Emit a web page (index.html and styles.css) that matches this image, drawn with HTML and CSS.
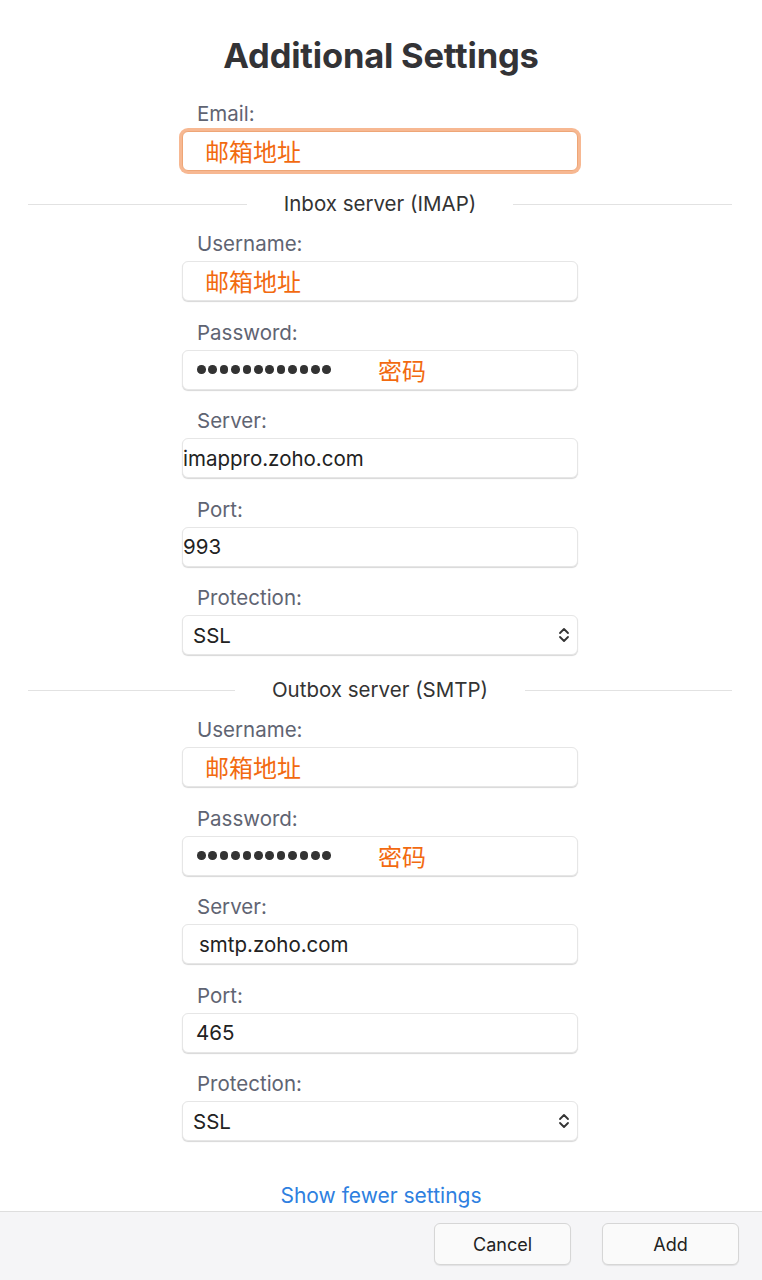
FILE: index.html
```html
<!DOCTYPE html>
<html>
<head>
<meta charset="utf-8">
<link rel="stylesheet" href="styles.css">
</head>
<body>
<div class="page">
  <h1 class="title">Additional Settings</h1>
  <div class="form">
    <div class="group email">
      <div class="label">Email:</div>
      <div class="field focus"><span class="cn">邮箱地址</span></div>
    </div>

    <div class="sep"><span class="line"></span><span class="sep-text">Inbox server (IMAP)</span><span class="line"></span></div>

    <div class="group">
      <div class="label">Username:</div>
      <div class="field"><span class="cn">邮箱地址</span></div>
    </div>
    <div class="group">
      <div class="label">Password:</div>
      <div class="field pw"><span class="dots"><i></i><i></i><i></i><i></i><i></i><i></i><i></i><i></i><i></i><i></i><i></i><i></i></span><span class="cn pwcn">密码</span></div>
    </div>
    <div class="group">
      <div class="label">Server:</div>
      <div class="field tight"><span class="val">imappro.zoho.com</span></div>
    </div>
    <div class="group">
      <div class="label">Port:</div>
      <div class="field tight"><span class="val">993</span></div>
    </div>
    <div class="group last">
      <div class="label">Protection:</div>
      <div class="field select"><span class="val">SSL</span>
        <svg class="chev" width="12" height="18" viewBox="0 0 12 18"><path d="M2 7 L6 3 L10 7 M2 11 L6 15 L10 11" fill="none" stroke="#333" stroke-width="1.8" stroke-linecap="round" stroke-linejoin="round"/></svg>
      </div>
    </div>

    <div class="sep sep-out"><span class="line"></span><span class="sep-text">Outbox server (SMTP)</span><span class="line"></span></div>

    <div class="group">
      <div class="label">Username:</div>
      <div class="field"><span class="cn">邮箱地址</span></div>
    </div>
    <div class="group">
      <div class="label">Password:</div>
      <div class="field pw"><span class="dots"><i></i><i></i><i></i><i></i><i></i><i></i><i></i><i></i><i></i><i></i><i></i><i></i></span><span class="cn pwcn">密码</span></div>
    </div>
    <div class="group">
      <div class="label">Server:</div>
      <div class="field wide"><span class="val">smtp.zoho.com</span></div>
    </div>
    <div class="group">
      <div class="label">Port:</div>
      <div class="field mid"><span class="val">465</span></div>
    </div>
    <div class="group last">
      <div class="label">Protection:</div>
      <div class="field select"><span class="val">SSL</span>
        <svg class="chev" width="12" height="18" viewBox="0 0 12 18"><path d="M2 7 L6 3 L10 7 M2 11 L6 15 L10 11" fill="none" stroke="#333" stroke-width="1.8" stroke-linecap="round" stroke-linejoin="round"/></svg>
      </div>
    </div>
  </div>
  <div class="more"><a class="link">Show fewer settings</a></div>
  <div class="footer">
    <button class="btn">Cancel</button>
    <button class="btn">Add</button>
  </div>
</div>
</body>
</html>
```

FILE: styles.css
```css
* { box-sizing: border-box; }
html, body { margin: 0; padding: 0; background: #fff; }
body {
  font-family: Inter, "Noto Sans", "Noto Sans CJK SC", sans-serif;
  color: #2b2b2d;
  width: 762px;
  height: 1280px;
  overflow: hidden;
}
.page {
  display: flex;
  flex-direction: column;
  height: 1280px;
  padding-top: 35px;
}
.title {
  margin: 0;
  text-align: center;
  font-size: 34.5px;
  line-height: 42px;
  font-weight: 700;
  color: #333336;
  letter-spacing: -0.2px;
}
.form {
  display: flex;
  flex-direction: column;
  padding-top: 26px;
  padding-right: 2px;
}
.group {
  width: 396px;
  margin: 0 auto 20.5px;
  display: flex;
  flex-direction: column;
  gap: 6px;
}
.group.email { margin-bottom: 22px; }
.group.last { margin-bottom: 0; }
.label {
  padding-left: 15px;
  font-size: 20.5px;
  line-height: 22px;
  color: #5f6472;
}
.field {
  height: 40px;
  background: #fff;
  border: 1px solid #e6e6e6;
  border-radius: 6px;
  box-shadow: 0 1px 1px rgba(0,0,0,0.16);
  display: flex;
  align-items: center;
  padding-left: 22px;
  position: relative;
}
.field.focus {
  border-color: #eea677;
  box-shadow: 0 0 0 3px rgba(244, 160, 110, 0.75);
}
.field.tight { padding-left: 0; }
.field.wide { padding-left: 16px; }
.field.mid { padding-left: 13px; }
.field.select { padding-left: 10px; }
.field.pw { padding-left: 14px; }
.cn {
  font-family: "Noto Sans CJK SC", sans-serif;
  font-size: 24px;
  line-height: 30px;
  color: #f26a10;
}
.val {
  font-size: 20.5px;
  color: #222;
}
.dots { display: flex; gap: 2.8px; }
.dots i {
  display: block;
  width: 8.6px;
  height: 8.6px;
  border-radius: 50%;
  background: #333;
}
.pwcn { margin-left: 47px; }
.chev { position: absolute; right: 7px; top: 10px; }
.sep {
  display: flex;
  align-items: center;
  padding: 0 28px;
  height: 22px;
  margin-bottom: 18px;
}
.sep .line {
  flex: 1;
  height: 1px;
  background: #e2e2e2;
}
.sep-text {
  font-size: 20.5px;
  color: #333;
  padding: 0 37px;
  line-height: 22px;
}
.sep-out { margin-top: 24px; }
.more {
  text-align: center;
  margin-top: 43px;
  height: 27px;
  line-height: 24px;
}
.link {
  font-size: 21px;
  color: #2e7fe0;
  cursor: pointer;
}
.footer {
  flex: 1;
  background: #f5f5f7;
  border-top: 1px solid #dedede;
  display: flex;
  justify-content: flex-end;
  align-items: flex-start;
  gap: 31px;
  padding: 11px 23px 0 0;
}
.btn {
  width: 137px;
  height: 42px;
  border: 1px solid #d6d6d6;
  border-radius: 6px;
  background: #fafafa;
  box-shadow: 0 1px 1px rgba(0,0,0,0.08);
  font-family: Inter, "Noto Sans", sans-serif;
  font-size: 18px;
  color: #222;
}
```
